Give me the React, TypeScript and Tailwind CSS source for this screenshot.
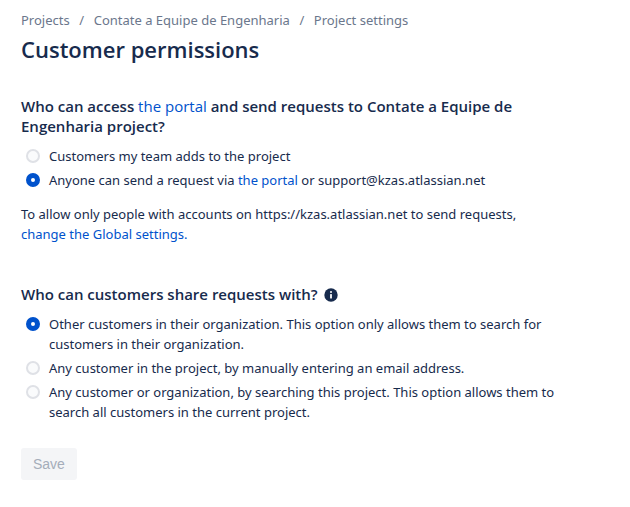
import type { ReactNode } from "react";

const linkClass = "text-[#0052cc] hover:underline";

const breadcrumbs = ["Projects", "Contate a Equipe de Engenharia", "Project settings"];

const shareOptions = [
  "Other customers in their organization. This option only allows them to search for customers in their organization.",
  "Any customer in the project, by manually entering an email address.",
  "Any customer or organization, by searching this project. This option allows them to search all customers in the current project.",
];

type RadioOptionProps = {
  id: string;
  name: string;
  defaultChecked?: boolean;
  children: ReactNode;
};

function RadioOption({ id, name, defaultChecked, children }: RadioOptionProps) {
  return (
    <div className="flex items-start gap-2 pl-1">
      <span className="flex h-5 w-4 shrink-0 items-center justify-center">
        <input
          type="radio"
          id={id}
          name={name}
          defaultChecked={defaultChecked}
          className="h-3.5 w-3.5 appearance-none rounded-full border-2 border-[#dfe1e6] bg-[#fafbfc] checked:border-5 checked:border-[#0052cc] checked:bg-white"
        />
      </span>
      <label htmlFor={id}>{children}</label>
    </div>
  );
}

function InfoIcon() {
  return (
    <svg viewBox="0 0 14 14" className="mt-0.5 h-3.5 w-3.5" role="img" aria-label="More information">
      <circle cx="7" cy="7" r="6.7" fill="#172b4d" />
      <circle cx="7" cy="4" r="1" fill="#fff" />
      <rect x="6.1" y="6" width="1.8" height="4.6" rx="0.6" fill="#fff" />
    </svg>
  );
}

export default function App() {
  return (
    <main className="bg-white px-[21px] pt-2.5 pb-6 font-['Noto_Sans','Open_Sans',sans-serif] text-[13px] leading-5 text-[#172b4d]">
      {/* Page header */}
      <nav aria-label="Breadcrumb">
        <ol className="flex text-[#6b778c]">
          {breadcrumbs.map((crumb, index) => (
            <li key={crumb} className="flex">
              {index > 0 && <span className="w-6 text-center">/</span>}
              <a href="#" className="hover:underline">
                {crumb}
              </a>
            </li>
          ))}
        </ol>
      </nav>
      <h1 className="mt-[3px] font-['Open_Sans',sans-serif] text-[22px] leading-8 font-semibold">
        Customer permissions
      </h1>

      <form onSubmit={(event) => event.preventDefault()}>
        {/* Portal access */}
        <section className="mt-[31px] max-w-[540px]">
          <h2 className="max-w-[500px] font-['Open_Sans',sans-serif] text-[15px] font-semibold">
            Who can access{" "}
            <a href="#" className={`${linkClass} font-normal`}>
              the portal
            </a>{" "}
            and send requests to Contate a Equipe de Engenharia project?
          </h2>
          <div className="mt-2.5 space-y-1">
            <RadioOption id="access-team" name="access">
              Customers my team adds to the project
            </RadioOption>
            <RadioOption id="access-anyone" name="access" defaultChecked>
              Anyone can send a request via{" "}
              <a href="#" className={linkClass}>
                the portal
              </a>{" "}
              or support@kzas.atlassian.net
            </RadioOption>
          </div>
          <p className="mt-3.5">
            To allow only people with accounts on https://kzas.atlassian.net to send requests,{" "}
            <a href="#" className={`${linkClass} inline-block`}>
              change the Global settings.
            </a>
          </p>
        </section>

        {/* Request sharing */}
        <section className="mt-10 max-w-[540px]">
          <div className="flex items-center gap-1.5">
            <h2 className="font-['Open_Sans',sans-serif] text-[15px] font-semibold">
              Who can customers share requests with?
            </h2>
            <InfoIcon />
          </div>
          <div className="mt-2.5 space-y-1">
            {shareOptions.map((option, index) => (
              <RadioOption key={option} id={`share-${index}`} name="share" defaultChecked={index === 0}>
                {option}
              </RadioOption>
            ))}
          </div>
        </section>

        <button
          type="submit"
          disabled
          className="mt-[26px] h-8 rounded-[3px] bg-[#f4f5f7] px-3 font-['Liberation_Sans',Arial,sans-serif] text-sm text-[#a5adba]"
        >
          Save
        </button>
      </form>
    </main>
  );
}
